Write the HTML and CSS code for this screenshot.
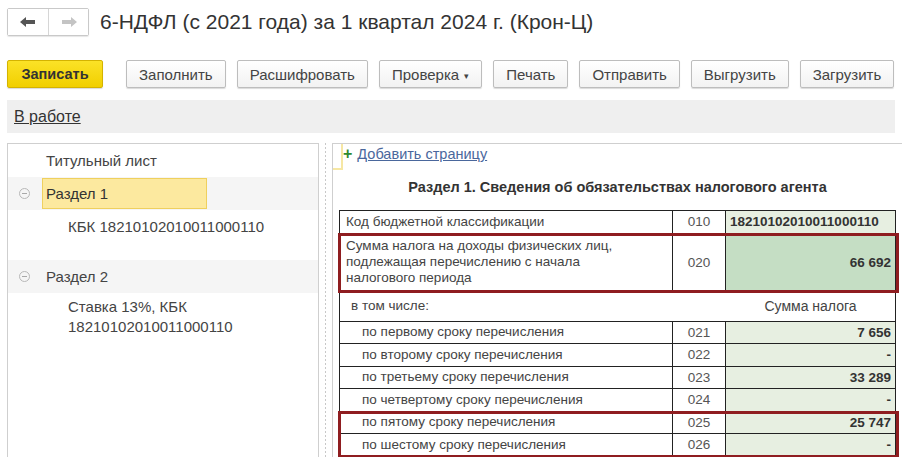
FILE: index.html
```html
<!DOCTYPE html>
<html lang="ru">
<head>
  <meta charset="UTF-8" />
  <title>6-НДФЛ</title>
  <link rel="stylesheet" href="styles.css">
</head>
<body>

<!-- Заголовок -->
<header class="title-bar">
  <div class="nav-group">
    <button class="nav-btn">
      <svg width="16" height="12" viewBox="0 0 16 12"><path d="M0 6 L6 1 L6 4 L15 4 L15 8 L6 8 L6 11 Z" fill="#555"/></svg>
    </button>
    <button class="nav-btn">
      <svg width="16" height="12" viewBox="0 0 16 12"><path d="M16 6 L10 1 L10 4 L1 4 L1 8 L10 8 L10 11 Z" fill="#c4c4c4"/></svg>
    </button>
  </div>
  <h1 class="doc-title">6-НДФЛ (с 2021 года) за 1 квартал 2024 г. (Крон-Ц)</h1>
</header>

<!-- Командная панель -->
<div class="toolbar">
  <button class="btn btn-main">Записать</button>
  <button class="btn first">Заполнить</button>
  <button class="btn">Расшифровать</button>
  <button class="btn">Проверка <span class="drop">&#9662;</span></button>
  <button class="btn">Печать</button>
  <button class="btn">Отправить</button>
  <button class="btn">Выгрузить</button>
  <button class="btn">Загрузить</button>
</div>

<div class="status-bar"><a href="#">В работе</a></div>

<div class="workspace">
  <!-- Дерево разделов -->
  <aside class="tree">
    <div class="tree-row">Титульный лист</div>
    <div class="tree-row band">
      <span class="toggle"></span>
      <span class="selected">Раздел 1</span>
    </div>
    <div class="tree-row sub">КБК 18210102010011000110</div>
    <div class="tree-gap"></div>
    <div class="tree-row band">
      <span class="toggle"></span>
      <span class="node">Раздел 2</span>
    </div>
    <div class="tree-sub-multi">Ставка 13%, КБК<br>18210102010011000110</div>
  </aside>

  <div class="splitter"></div>

  <!-- Форма раздела -->
  <main class="sheet">
    <div class="add-row">
      <span class="focus-mark"></span>
      <span class="plus">+</span>
      <a href="#">Добавить страницу</a>
    </div>
    <h2 class="sheet-title">Раздел 1. Сведения об обязательствах налогового агента</h2>

    <div class="form-table">
      <div class="row top">
        <div class="cell label">Код бюджетной классификации</div>
        <div class="cell code">010</div>
        <div class="cell value kbk">18210102010011000110</div>
      </div>
      <div class="hl">
        <div class="row tall">
          <div class="cell label">Сумма налога на доходы физических лиц,<br>подлежащая перечислению с начала<br>налогового периода</div>
          <div class="cell code">020</div>
          <div class="cell value strong">66 692</div>
        </div>
      </div>
      <div class="row sub-head">
        <div class="cell label plain">в том числе:</div>
        <div class="cell code plain"></div>
        <div class="cell head">Сумма налога</div>
      </div>
      <div class="row">
        <div class="cell label ind">по первому сроку перечисления</div>
        <div class="cell code">021</div>
        <div class="cell value">7 656</div>
      </div>
      <div class="row">
        <div class="cell label ind">по второму сроку перечисления</div>
        <div class="cell code">022</div>
        <div class="cell value">-</div>
      </div>
      <div class="row">
        <div class="cell label ind">по третьему сроку перечисления</div>
        <div class="cell code">023</div>
        <div class="cell value">33 289</div>
      </div>
      <div class="row">
        <div class="cell label ind">по четвертому сроку перечисления</div>
        <div class="cell code">024</div>
        <div class="cell value">-</div>
      </div>
      <div class="hl">
        <div class="row">
          <div class="cell label ind">по пятому сроку перечисления</div>
          <div class="cell code">025</div>
          <div class="cell value">25 747</div>
        </div>
        <div class="row">
          <div class="cell label ind">по шестому сроку перечисления</div>
          <div class="cell code">026</div>
          <div class="cell value">-</div>
        </div>
      </div>
    </div>
  </main>
</div>

</body>
</html>
```

FILE: styles.css
```css
body {
  margin: 0;
  font-family: 'Liberation Sans', Arial, sans-serif;
  color: #333;
  background: #fff;
  overflow: hidden;
}
button {
  font-family: inherit;
}

/* заголовок */
.title-bar {
  display: flex;
  align-items: center;
  height: 43px;
  padding-left: 7px;
}
.nav-group {
  display: flex;
  border: 1px solid #c9c9c9;
  border-radius: 2px;
  height: 26px;
  margin-top: 1px;
  box-shadow: 0 1px 1px rgba(0,0,0,0.1);
}
.nav-btn {
  width: 40px;
  height: 26px;
  border: none;
  background: #fff;
  display: flex;
  align-items: center;
  justify-content: center;
  padding: 0;
}
.nav-btn + .nav-btn {
  border-left: 1px solid #d6d6d6;
}
.doc-title {
  margin: 0 0 0 11px;
  font-size: 21px;
  font-weight: normal;
  color: #333;
}

/* кнопки */
.toolbar {
  display: flex;
  gap: 11px;
  padding: 17px 0 0 7px;
  height: 28px;
}
.btn {
  height: 28px;
  padding: 0 12px;
  font-size: 15px;
  color: #444;
  white-space: nowrap;
  background: linear-gradient(#fff, #f2f2f2);
  border: 1px solid #bdbdbd;
  border-radius: 2px;
  box-shadow: 0 1px 1px rgba(0,0,0,0.15);
}
.btn-main {
  width: 96px;
  font-size: 14.5px;
  font-weight: bold;
  color: #333;
  background: linear-gradient(#fbe227, #f1cf00);
  border-color: #d4b300;
}
.btn.first {
  margin-left: 12px;
}
.drop {
  font-size: 9px;
  vertical-align: 1px;
  margin-left: 1px;
}

.status-bar {
  margin: 12px 7px 0 7px;
  height: 33px;
  background: #efefef;
  display: flex;
  align-items: center;
  padding-left: 7px;
  font-size: 16px;
}
.status-bar a {
  color: #333;
}

/* рабочая область */
.workspace {
  display: flex;
  margin-top: 10px;
  padding-left: 7px;
  height: 320px;
}
.tree {
  width: 310px;
  border: 1px solid #cfcfcf;
  border-bottom: none;
  font-size: 15px;
  color: #444;
}
.tree-row {
  height: 33px;
  display: flex;
  align-items: center;
  padding-left: 38px;
}
.tree-row.band {
  background: #f5f5f5;
  padding-left: 11px;
}
.toggle {
  width: 9px;
  height: 9px;
  border: 1px solid #b8b8b8;
  border-radius: 50%;
  position: relative;
  margin-right: 8px;
}
.toggle::after {
  content: "";
  position: absolute;
  left: 2px;
  right: 2px;
  top: 4px;
  height: 1px;
  background: #a8a8a8;
}
.selected {
  width: 160px;
  height: 29px;
  line-height: 29px;
  padding-left: 3px;
  margin-left: 4px;
  background: #fce99f;
  border: 1px solid #efd05e;
  color: #333;
}
.node {
  margin-left: 8px;
}
.tree-row.sub {
  padding-left: 60px;
}
.tree-gap {
  height: 17px;
}
.tree-sub-multi {
  padding: 4px 0 0 60px;
  line-height: 20px;
}

.splitter {
  width: 12px;
  margin-right: 1px;
  background: linear-gradient(#c8c8c8 50%, transparent 50%) 6px 0 / 1px 4px repeat-y;
}

.sheet {
  flex: 1;
  border: 1px solid #cfcfcf;
  border-right: none;
  border-bottom: none;
  padding-left: 6px;
}
.add-row {
  display: flex;
  align-items: flex-start;
  height: 26px;
  margin-left: -6px;
  font-size: 14.5px;
}
.focus-mark {
  width: 8px;
  height: 24px;
  border-right: 2px solid #f6e7a4;
  border-bottom: 2px solid #f6e7a4;
}
.plus {
  color: #2f8a2f;
  font-weight: bold;
  font-size: 16px;
  margin: 1px 5px 0 0;
}
.add-row a {
  color: #4a679c;
  margin-top: 2px;
}
.sheet-title {
  margin: 9px 0 0 0;
  width: 557px;
  text-align: center;
  font-size: 14.5px;
  font-weight: bold;
  color: #333;
  height: 31px;
}

/* таблица формы */
.form-table {
  width: 557px;
  font-size: 13.5px;
  color: #444;
}
.row {
  display: grid;
  grid-template-columns: 334px 53px 1fr;
  height: 21.5px;
  border-bottom: 1px solid #222;
}
.row.top {
  border-top: 1px solid #222;
}
.row.tall {
  height: 57px;
}
.cell {
  border-right: 1px solid #222;
  display: flex;
  align-items: center;
  padding: 0 4px;
  overflow: hidden;
}
.cell.label {
  border-left: 1px solid #222;
  padding-left: 6px;
  line-height: 16px;
}
.cell.ind {
  padding-left: 22px;
}
.cell.code {
  justify-content: center;
  color: #555;
}
.cell.value {
  background: #e7efe1;
  justify-content: flex-end;
  font-weight: bold;
  color: #333;
}
.cell.kbk {
  justify-content: flex-start;
}
.cell.strong {
  background: #c5dec4;
}
.row.sub-head {
  height: 29px;
}
.cell.plain {
  border-right: none;
  padding-left: 11px;
}
.cell.head {
  justify-content: center;
  background: #fff;
  font-size: 14px;
}
.hl {
  outline: 3px solid #8f1d20;
  outline-offset: -2px;
  position: relative;
  margin-right: -2px;
}
.hl .row {
  margin-right: 2px;
}
```
